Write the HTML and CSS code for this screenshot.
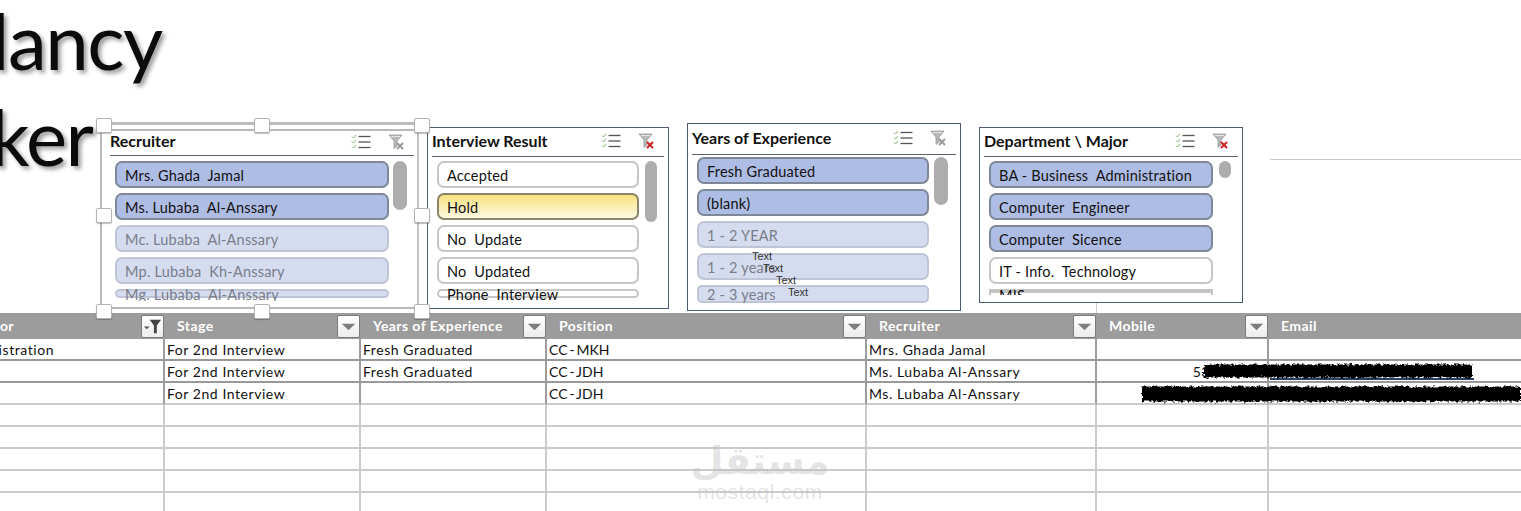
FILE: index.html
```html
<!DOCTYPE html>
<html lang="en">
<head>
<meta charset="utf-8">
<title>Vacancy tracker</title>
<link rel="stylesheet" href="styles.css">
</head>
<body>
<svg class="defs" aria-hidden="true">
  <defs>
    <symbol id="ms" viewBox="0 0 20 16">
      <g fill="none" stroke="#7fb56b" stroke-width="1">
        <path d="M1 2.500l1.500 1.500 2.500-3"/><path d="M1 7.500l1.500 1.500 2.500-3"/><path d="M1 12.500l1.500 1.500 2.500-3"/>
      </g>
      <g stroke="#555" stroke-width="1.300"><path d="M7.500 2.500h12"/><path d="M7.500 8h12"/><path d="M7.500 13.500h12"/></g>
    </symbol>
    <symbol id="clr" viewBox="0 0 18 16">
      <path d="M1 1h13l-5 6v5l-3 2.500v-7.500z" fill="#b9b9b9" stroke="#8e8e8e" stroke-width=".7"/>
      <path d="M3 2.500h9" stroke="#e8e8e8" stroke-width="1"/>
    </symbol>
    <filter id="rough" filterUnits="userSpaceOnUse" x="0" y="0" width="391" height="50">
      <feTurbulence type="fractalNoise" baseFrequency=".35" numOctaves="2" seed="4" result="n"/>
      <feDisplacementMap in="SourceGraphic" in2="n" scale="5" xChannelSelector="R" yChannelSelector="G"/>
    </filter>
  </defs>
</svg>

<div class="page">
  <header class="title">
    <h1 class="title-text"><span class="line-one">lancy</span><span class="line-two">ker</span></h1>
  </header>

  <section class="slicer s-rec">
    <div class="sl-head"><b>Recruiter</b>
      <svg class="ic-ms"><use href="#ms"/></svg>
      <svg class="ic-clr" viewBox="0 0 18 16"><use href="#clr"/><path d="M9 9l6 6m0-6l-6 6" stroke="#9a9a9a" stroke-width="2"/></svg>
    </div>
    <div class="sl-body">
      <div class="sl-list">
        <div class="it sel">Mrs. Ghada  Jamal</div>
        <div class="it sel">Ms. Lubaba  Al-Anssary</div>
        <div class="it dim">Mc. Lubaba  Al-Anssary</div>
        <div class="it dim">Mp. Lubaba  Kh-Anssary</div>
        <div class="it dim squash">Mg. Lubaba  Al-Anssary</div>
      </div>
      <div class="thumb"></div>
    </div>
  </section>

  <section class="slicer s-res">
    <div class="sl-head"><b>Interview Result</b>
      <svg class="ic-ms"><use href="#ms"/></svg>
      <svg class="ic-clr" viewBox="0 0 18 16"><use href="#clr"/><path d="M9 9l6 6m0-6l-6 6" stroke="#c22" stroke-width="2"/></svg>
    </div>
    <div class="sl-body">
      <div class="sl-list">
        <div class="it">Accepted</div>
        <div class="it hold">Hold</div>
        <div class="it">No  Update</div>
        <div class="it">No  Updated</div>
        <div class="it squash">Phone  Interview</div>
      </div>
      <div class="thumb"></div>
    </div>
  </section>

  <section class="slicer s-exp">
    <div class="sl-head"><b>Years of Experience</b>
      <svg class="ic-ms"><use href="#ms"/></svg>
      <svg class="ic-clr" viewBox="0 0 18 16"><use href="#clr"/><path d="M9 9l6 6m0-6l-6 6" stroke="#9a9a9a" stroke-width="2"/></svg>
    </div>
    <div class="sl-body">
      <div class="sl-list">
        <div class="it sel">Fresh Graduated</div>
        <div class="it sel">(blank)</div>
        <div class="it dim">1 - 2 YEAR</div>
        <div class="it dim">1 - 2 years</div>
        <div class="it dim squash">2 - 3 years</div>
      </div>
      <div class="thumb"></div>
    </div>
  </section>

  <section class="slicer s-dep">
    <div class="sl-head"><b>Department \ Major</b>
      <svg class="ic-ms"><use href="#ms"/></svg>
      <svg class="ic-clr" viewBox="0 0 18 16"><use href="#clr"/><path d="M9 9l6 6m0-6l-6 6" stroke="#c22" stroke-width="2"/></svg>
    </div>
    <div class="sl-body">
      <div class="sl-list">
        <div class="it sel">BA - Business  Administration</div>
        <div class="it sel">Computer  Engineer</div>
        <div class="it sel">Computer  Sicence</div>
        <div class="it">IT - Info.  Technology</div>
        <div class="it bar">MIS</div>
      </div>
      <div class="thumb"></div>
    </div>
  </section>

  <span class="tx t1">Text</span>
  <span class="tx t2">Text</span>
  <span class="tx t3">Text</span>
  <span class="tx t4">Text</span>

  <div class="rule-right"></div>
  <div class="tick"></div>

  <div class="frame"></div>
  <i class="h h-tl"></i><i class="h h-tm"></i><i class="h h-tr"></i>
  <i class="h h-ml"></i><i class="h h-mr"></i>
  <i class="h h-bl"></i><i class="h h-bm"></i><i class="h h-br"></i>

  <main class="sheet">
    <div class="row head">
      <div class="c end-major"><span>Major</span><button class="fb"><svg viewBox="0 0 22 22"><path d="M2 11h6l-3 3z" fill="#555"/><path d="M8 4h12l-4.500 6v8h-3v-8z" fill="#444"/></svg></button></div>
      <div class="c"><span>Stage</span><button class="fb"><svg viewBox="0 0 22 22"><path d="M4 8h14l-7 7z" fill="#7d7d7d"/></svg></button></div>
      <div class="c"><span>Years of Experience</span><button class="fb"><svg viewBox="0 0 22 22"><path d="M4 8h14l-7 7z" fill="#7d7d7d"/></svg></button></div>
      <div class="c"><span>Position</span><button class="fb"><svg viewBox="0 0 22 22"><path d="M4 8h14l-7 7z" fill="#7d7d7d"/></svg></button></div>
      <div class="c"><span>Recruiter</span><button class="fb"><svg viewBox="0 0 22 22"><path d="M4 8h14l-7 7z" fill="#7d7d7d"/></svg></button></div>
      <div class="c"><span>Mobile</span><button class="fb"><svg viewBox="0 0 22 22"><path d="M4 8h14l-7 7z" fill="#7d7d7d"/></svg></button></div>
      <div class="c"><span>Email</span></div>
    </div>
    <div class="row dark">
      <div class="c end-admin">BA - Business Administration</div><div class="c">For 2nd Interview</div><div class="c">Fresh Graduated</div><div class="c code">CC - MKH</div><div class="c">Mrs. Ghada Jamal</div><div class="c"></div><div class="c"></div>
    </div>
    <div class="row dark">
      <div class="c"></div><div class="c">For 2nd Interview</div><div class="c">Fresh Graduated</div><div class="c code">CC - JDH</div><div class="c">Ms. Lubaba Al-Anssary</div><div class="c num">53</div><div class="c"></div>
    </div>
    <div class="row mid">
      <div class="c"></div><div class="c">For 2nd Interview</div><div class="c"></div><div class="c code">CC - JDH</div><div class="c">Ms. Lubaba Al-Anssary</div><div class="c"></div><div class="c"></div>
    </div>
    <div class="row"><div class="c"></div><div class="c"></div><div class="c"></div><div class="c"></div><div class="c"></div><div class="c"></div><div class="c"></div></div>
    <div class="row"><div class="c"></div><div class="c"></div><div class="c"></div><div class="c"></div><div class="c"></div><div class="c"></div><div class="c"></div></div>
    <div class="row"><div class="c"></div><div class="c"></div><div class="c"></div><div class="c"></div><div class="c"></div><div class="c"></div><div class="c"></div></div>
    <div class="row"><div class="c"></div><div class="c"></div><div class="c"></div><div class="c"></div><div class="c"></div><div class="c"></div><div class="c"></div></div>
    <div class="row"><div class="c"></div><div class="c"></div><div class="c"></div><div class="c"></div><div class="c"></div><div class="c"></div><div class="c"></div></div>
  </main>

  <svg class="scribble" viewBox="0 0 391 50" aria-hidden="true">
    <path class="link-line" d="M140 19h204"/>
    <path class="ink ink-a" d="M74 11h268"/>
    <path class="ink ink-b" d="M12 34h379"/>
  </svg>

  <div class="mark">
    <span class="mark-ar" dir="rtl" lang="ar">مستقل</span>
    <span class="mark-en">mostaql.com</span>
  </div>
</div>
</body>
</html>
```
FILE: styles.css
```css
* { box-sizing: border-box; }
html, body { margin: 0; padding: 0; background: #fff; }
body { font-family: Lato, "Liberation Sans", sans-serif; color: #111; }
.defs { position: absolute; width: 0; height: 0; }
.page { position: relative; width: 1521px; height: 511px; overflow: hidden; }

/* Title */
.title { height: 313px; overflow: hidden; }
.title-text { margin: 0; font-weight: 400; font-size: 78px; line-height: 98px; letter-spacing: -1.5px; color: #0b0b0b; text-shadow: 3px 3px 4px rgba(0,0,0,.4); }
.line-one, .line-two { display: block; }
.line-one { margin: -9px 0 0 -9px; }
.line-two { margin: -2px 0 0 -10px; }

/* Sheet */
.row { display: grid; grid-template-columns: 165px 196px 186px 320px 230px 172px 252px; height: 22px; font-size: 14px; letter-spacing: .55px; }
.c { display: flex; align-items: center; padding: 2px 2px 0; border-right: 2px solid #cbcbcb; border-bottom: 2px solid #cbcbcb; white-space: nowrap; overflow: hidden; line-height: 18px; }
.c:last-child { border-right: 0; }
.code { word-spacing: -2px; letter-spacing: .1px; }
.dark .c { border-bottom-color: #999; border-right-color: #9d9d9d; }
.mid .c { border-right-color: #9d9d9d; }
.head { height: 26px; background: #9c9c9c; color: #fff; font-weight: 700; letter-spacing: .42px; }
.head .c { border: 0; padding: 0 1px 0 12px; justify-content: space-between; overflow: hidden; }
.head .c.end-major { justify-content: flex-end; padding: 0 1px 0 0; gap: 127px; }
.end-admin { justify-content: flex-end; padding-right: 109px; }
.num { justify-content: flex-end; padding-right: 57px; }
.fb { flex: none; width: 23px; height: 23px; padding: 0; border: 1px solid #7b7b7b; border-radius: 2px; background: linear-gradient(#fff, #ececec); display: block; }
.fb svg { display: block; width: 100%; height: 100%; }

/* Slicers */
.slicer { position: absolute; background: #fff; border: 1px solid #4d5b73; padding: 0 4px; }
.sl-head { display: flex; align-items: center; border-bottom: 1px solid #5a6270; font-size: 16px; }
.sl-head b { flex: 1; margin-bottom: 4px; white-space: nowrap; }
.ic-ms { width: 20px; height: 16px; margin-bottom: 2px; }
.ic-clr { width: 18px; height: 16px; margin: 0 8px 2px 17px; }
.sl-body { display: flex; gap: 4px; padding: 4px 5px 0; }
.sl-list { flex: 1; min-width: 0; overflow: hidden; }
.thumb { flex: none; width: 14px; border-radius: 7px; background: #adadad; }
.it { height: 27px; margin-bottom: 5px; padding: 0 8px; border: 2px solid #c6c6c6; border-radius: 7px; background: #fff; font-size: 14.500px; letter-spacing: .2px; line-height: 25px; white-space: pre; color: #111; }
.sel { background: #aebde4; border-color: #7f8899; }
.dim { background: #d5dcef; border-color: #bfc5d6; color: #7a7d8b; }
.hold { background: linear-gradient(#f8e27f, #fdf9e3); border-color: #8b8468; }
.squash { height: 9px; margin: 0; line-height: 7px; border-radius: 5px; }
.bar { height: 6px; margin: 0; background: linear-gradient(#c4c4c4 4px, transparent 4px); border-width: 0 2px; line-height: 14px; border-radius: 0; }

.s-rec { left: 100px; top: 129px; width: 319px; height: 180px; border: 2px solid #b9b9b9; border-right-color: #c4c4c4; padding: 0 3px 0 8px; }
.s-rec .sl-head { height: 25px; }
.s-rec .sl-head b { margin-bottom: 6px; }
.s-rec .sl-body { padding: 5px 7px 0 5px; }
.s-rec .sl-list { height: 140px; }
.s-rec .thumb { height: 49px; }
.s-res { left: 427px; top: 127px; width: 242px; height: 182px; }
.s-res .sl-head { height: 29px; }
.s-res .sl-list { height: 141px; }
.s-res .sl-body { gap: 6px; padding-right: 7px; }
.s-res .thumb { width: 12px; height: 61px; }
.s-exp { left: 687px; top: 123px; width: 274px; height: 188px; }
.s-exp .sl-head { height: 31px; }
.s-exp .sl-body { padding-top: 2px; gap: 5px; padding-right: 8px;}
.s-exp .sl-list { height: 146px; }
.s-exp .squash { height: 18px; line-height: 16px; }
.s-exp .thumb { height: 48px; }
.s-dep { left: 979px; top: 127px; width: 264px; height: 176px; }
.s-dep .sl-head { height: 29px; }
.s-dep .sl-list { height: 134px; }
.s-dep .sl-body { gap: 6px; padding-right: 7px; }
.s-dep .thumb { width: 12px; height: 17px; }

/* Overlay labels and rules */
.tx { position: absolute; font: 11px/12px "Liberation Sans", sans-serif; color: #333; }
.t1 { left: 752px; top: 250px; }
.t2 { left: 763px; top: 262px; }
.t3 { left: 776px; top: 274px; }
.t4 { left: 788px; top: 286px; }
.rule-right { position: absolute; left: 1270px; top: 159px; width: 251px; height: 1px; background: #c8c8c8; }
.tick { position: absolute; left: 1096px; top: 303px; width: 1px; height: 10px; background: #cfcfcf; }

/* Selection frame and handles */
.frame { position: absolute; left: 104px; top: 122px; width: 318px; height: 3px; background: #bdbdbd; }
.h { position: absolute; width: 16px; height: 15px; background: #fff; border: 1px solid #b3b3b3; border-radius: 2px; box-shadow: 0 1px 1px rgba(0,0,0,.25); }
.h-tl { left: 96px; top: 118px; }
.h-tm { left: 254px; top: 118px; }
.h-tr { left: 414px; top: 118px; }
.h-ml { left: 96px; top: 208px; }
.h-mr { left: 414px; top: 208px; }
.h-bl { left: 96px; top: 304px; }
.h-bm { left: 254px; top: 304px; }
.h-br { left: 414px; top: 304px; }

/* Redaction */
.scribble { position: absolute; left: 1130px; top: 360px; width: 391px; height: 50px; }
.ink { fill: none; stroke: #050505; filter: url(#rough); }
.ink-a { stroke-width: 13px; }
.ink-b { stroke-width: 15px; }
.link-line { fill: none; stroke: #2b3f6e; stroke-width: 2px; }

/* Watermark */
.mark { position: absolute; left: 680px; top: 440px; width: 160px; display: flex; flex-direction: column; align-items: center; color: rgba(190,190,190,.42); }
.mark-ar { font: 700 38px/42px "DejaVu Sans", sans-serif; }
.mark-en { font: 400 21px/20px "Liberation Sans", sans-serif; letter-spacing: .6px; }
```
